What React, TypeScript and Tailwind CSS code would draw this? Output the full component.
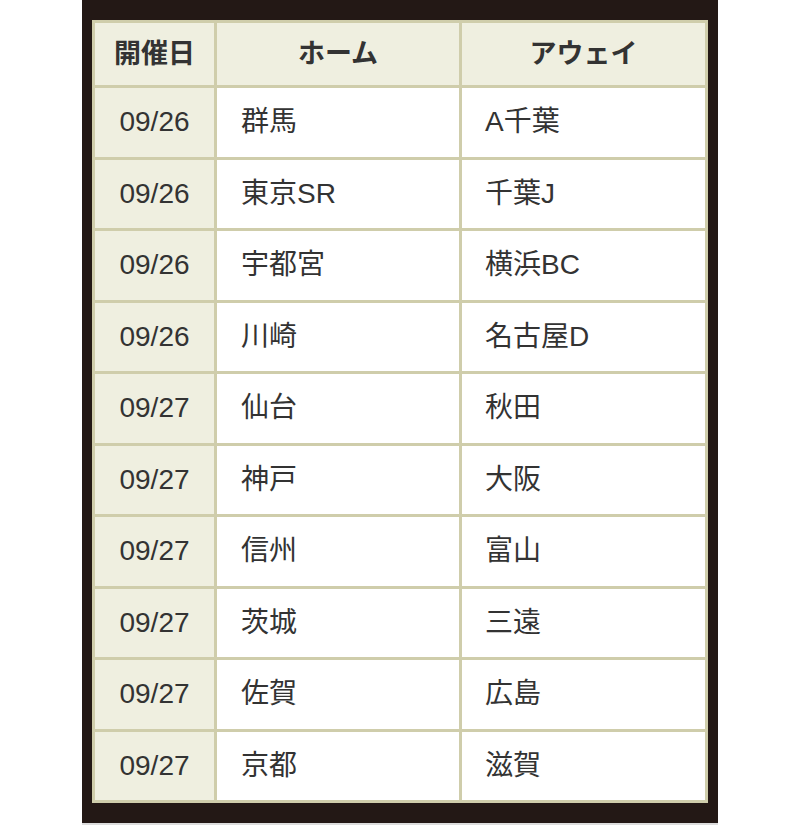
const rows: [string, string, string][] = [
  ['09/26', '群馬', 'A千葉'],
  ['09/26', '東京SR', '千葉J'],
  ['09/26', '宇都宮', '横浜BC'],
  ['09/26', '川崎', '名古屋D'],
  ['09/27', '仙台', '秋田'],
  ['09/27', '神戸', '大阪'],
  ['09/27', '信州', '富山'],
  ['09/27', '茨城', '三遠'],
  ['09/27', '佐賀', '広島'],
  ['09/27', '京都', '滋賀'],
]

export default function App() {
  return (
    <div
      className="w-[800px] bg-white"
      style={{ fontFamily: '"Liberation Sans", "Noto Sans CJK JP", sans-serif' }}
    >
      <div className="mx-[82px] border-b-2 border-[#dcdcdc] bg-[#231815] pl-[10px] pr-[11px] pt-[20px] pb-[20px]">
        <table className="w-[613px] table-fixed border-collapse text-[#333]">
          <colgroup>
            <col className="w-[122px]" />
            <col className="w-[245px]" />
            <col className="w-[246px]" />
          </colgroup>
          <thead>
            <tr className="h-[65px] bg-[#efefe0] text-[27px] font-bold">
              <th className="border-[3px] border-[#cfcdab] text-center">開催日</th>
              <th className="border-[3px] border-[#cfcdab] text-center">ホーム</th>
              <th className="border-[3px] border-[#cfcdab] text-center">アウェイ</th>
            </tr>
          </thead>
          <tbody>
            {rows.map(([date, home, away], i) => (
              <tr key={i} className="h-[71.5px] text-[28px]">
                <td className="border-[3px] border-[#cfcdab] bg-[#efefe0] text-center">{date}</td>
                <td className="border-[3px] border-[#cfcdab] bg-white pl-[24px]">{home}</td>
                <td className="border-[3px] border-[#cfcdab] bg-white pl-[23px]">{away}</td>
              </tr>
            ))}
          </tbody>
        </table>
      </div>
    </div>
  )
}
